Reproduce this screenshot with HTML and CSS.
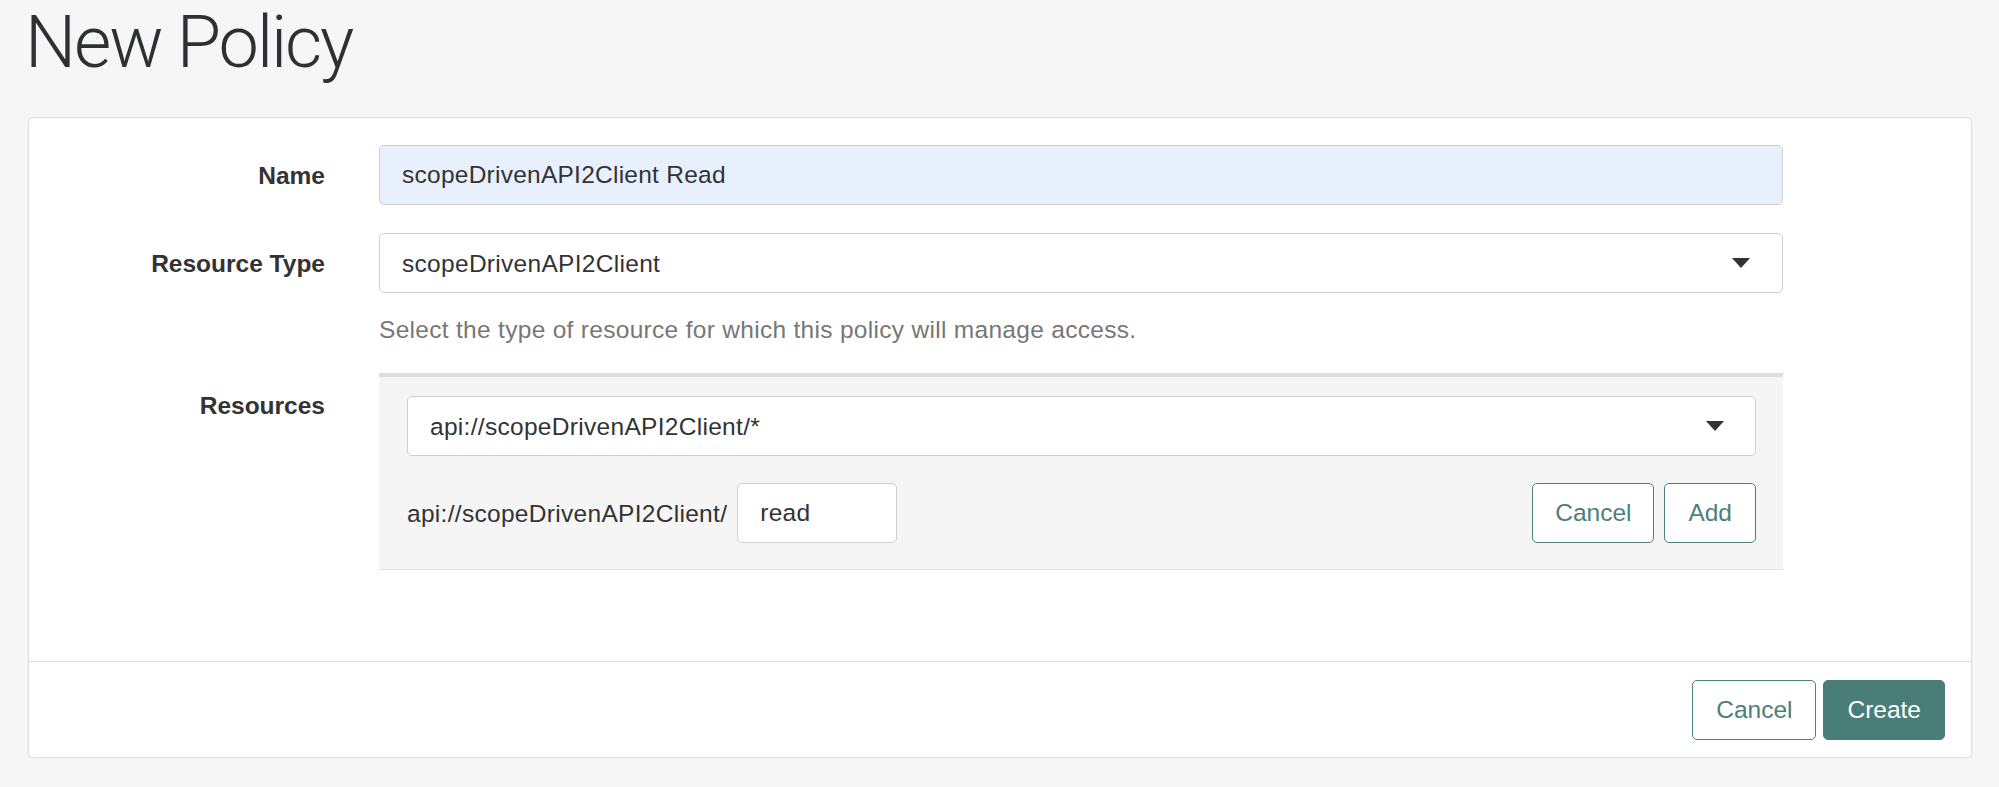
FILE: index.html
```html
<!DOCTYPE html>
<html lang="en">
<head>
<meta charset="utf-8">
<title>New Policy</title>
<link rel="stylesheet" href="styles.css">
</head>
<body>
<div class="page">
  <h1 class="title">New Policy</h1>
  <div class="card">
    <form class="card-body">
      <div class="form-row form-row-name">
        <label class="label">Name</label>
        <div class="field">
          <input class="input input-autofill" type="text" value="scopeDrivenAPI2Client Read">
        </div>
      </div>
      <div class="form-row form-row-type">
        <label class="label">Resource Type</label>
        <div class="field">
          <div class="select">
            <span class="select-value">scopeDrivenAPI2Client</span>
            <svg class="caret" width="18" height="10" viewBox="0 0 18 10"><path d="M0 0 H18 L9 10 Z" fill="#333"/></svg>
          </div>
          <p class="help">Select the type of resource for which this policy will manage access.</p>
        </div>
      </div>
      <div class="form-row form-row-resources">
        <label class="label label-resources">Resources</label>
        <div class="field panel">
          <div class="select">
            <span class="select-value">api://scopeDrivenAPI2Client/*</span>
            <svg class="caret caret-panel" width="18" height="10" viewBox="0 0 18 10"><path d="M0 0 H18 L9 10 Z" fill="#333"/></svg>
          </div>
          <div class="resource-add">
            <span class="prefix">api://scopeDrivenAPI2Client/</span>
            <input class="input input-small" type="text" value="read">
            <div class="actions">
              <button type="button" class="btn btn-outline btn-cancel-sm">Cancel</button>
              <button type="button" class="btn btn-outline">Add</button>
            </div>
          </div>
        </div>
      </div>
    </form>
    <div class="card-footer">
      <button type="button" class="btn btn-outline">Cancel</button>
      <button type="button" class="btn btn-primary">Create</button>
    </div>
  </div>
</div>
</body>
</html>
```

FILE: styles.css
```css
* {
  box-sizing: border-box;
}

html, body {
  margin: 0;
  padding: 0;
}

body {
  background: #f6f6f6;
  font-family: "Liberation Sans", Arial, Helvetica, sans-serif;
  font-size: 24.5px;
  line-height: 35px;
  letter-spacing: 0.3px;
  color: #333;
}

.page {
  padding: 0 27px 0 28px;
}

.title {
  margin: 3px 0 34px -3px;
  font-family: Roboto, "Liberation Sans", sans-serif;
  font-weight: 300;
  font-size: 72px;
  line-height: 80px;
  color: #2e3033;
  letter-spacing: -2.1px;
}

.card {
  background: #fff;
  border: 1px solid #dfdfdf;
  border-radius: 5px;
  box-shadow: 0 1px 2px rgba(0, 0, 0, 0.07);
}

.card-body {
  margin: 0;
  padding: 27px 0 91px 0;
}

.form-row {
  display: grid;
  grid-template-columns: 296px 1404px;
  column-gap: 54px;
  align-items: start;
}

.form-row-name {
  margin-bottom: 28px;
}

.form-row-type {
  margin-bottom: 26px;
}

.label {
  display: block;
  text-align: right;
  font-weight: bold;
  padding-top: 13px;
  color: #333;
  letter-spacing: 0;
}

.label-resources {
  padding-top: 15px;
}

.input {
  display: block;
  width: 100%;
  height: 60px;
  margin: 0;
  padding: 0 22px;
  border: 1px solid #cfcfcf;
  border-radius: 5px;
  background: #fff;
  font-family: inherit;
  font-size: 24.5px;
  letter-spacing: 0.25px;
  color: #333;
  outline: none;
}

.input-autofill {
  background: #e8f0fe;
}

.select {
  display: flex;
  align-items: center;
  justify-content: space-between;
  height: 60px;
  padding: 0 32px 0 22px;
  border: 1px solid #cfcfcf;
  border-radius: 5px;
  background: #fff;
  color: #333;
}

.caret {
  display: block;
  width: 18px;
  height: 10px;
  flex: none;
}

.caret-panel {
  margin-right: -1px;
}

.help {
  margin: 19px 0 0 0;
  color: #777;
}

.panel {
  background: #f5f5f5;
  border-top: 4px solid #dedede;
  border-bottom: 1px solid #e0e0e0;
  padding: 19px 27px 26px 28px;
}

.resource-add {
  display: flex;
  align-items: center;
  margin-top: 27px;
}

.prefix {
  margin-right: 10px;
  color: #333;
}

.input-small {
  width: 160px;
}

.actions {
  display: flex;
  gap: 10px;
  margin-left: auto;
}

.btn {
  height: 60px;
  margin: 0;
  padding: 0 23px;
  border-radius: 5px;
  font-family: inherit;
  font-size: 24.5px;
  line-height: 58px;
  letter-spacing: 0;
  cursor: pointer;
}

.btn-outline {
  background: #fff;
  border: 1px solid #4b8178;
  color: #4b8178;
}

.btn-cancel-sm {
  width: 122px;
  padding: 0;
}

.btn-primary {
  background: #487e77;
  border: 1px solid #487e77;
  color: #fff;
}

.card-footer {
  display: flex;
  justify-content: flex-end;
  gap: 7px;
  padding: 18px 26px 17px 0;
  border-top: 1px solid #dfdfdf;
}
```
